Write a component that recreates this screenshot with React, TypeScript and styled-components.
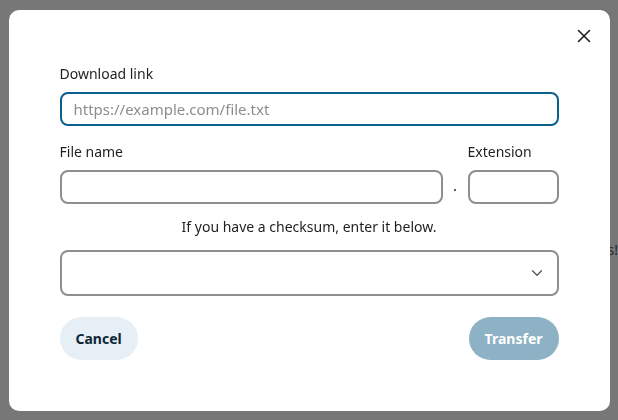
import React from "react";
import styled, { createGlobalStyle } from "styled-components";
import { X, ChevronDown } from "lucide-react";

const Global = createGlobalStyle`
  html, body { margin: 0; padding: 0; }
  body { font-family: "Noto Sans", "Open Sans", sans-serif; background: #fff; }
  * { box-sizing: border-box; }
`;

const Page = styled.div`
  width: 618px;
  height: 420px;
  display: flex;
  flex-direction: column;
  align-items: flex-end;
  padding-top: 240px;
  color: #555;
  font-size: 14px;
`;

const PageText = styled.p`
  margin: 0;
`;

const Overlay = styled.div`
  position: fixed;
  inset: 0;
  background: rgba(0, 0, 0, 0.535);
  display: flex;
  align-items: center;
  justify-content: center;
`;

const Modal = styled.div`
  width: 601px;
  height: 401px;
  background: #fff;
  border-radius: 10px;
  display: flex;
  flex-direction: column;
`;

const Header = styled.div`
  height: 54px;
  display: flex;
  justify-content: flex-end;
  align-items: flex-start;
  padding: 15px 15px 0 0;
`;

const CloseButton = styled.button`
  width: 22px;
  height: 22px;
  padding: 0;
  border: none;
  background: none;
  color: #1c1c1c;
  display: flex;
  align-items: center;
  justify-content: center;
  cursor: pointer;
`;

const Body = styled.div`
  padding: 0 51px;
  display: flex;
  flex-direction: column;
`;

const Label = styled.label`
  display: block;
  font-size: 14px;
  line-height: 20px;
  color: #1f1f1f;
  margin-bottom: 8px;
`;

const Input = styled.input<{ $focused?: boolean }>`
  width: 100%;
  height: 34px;
  border-radius: 8px;
  border: 2px solid ${(p) => (p.$focused ? "#0b5f8f" : "#8e8e8e")};
  padding: 0 12px;
  font-family: inherit;
  font-size: 15px;
  color: #222;
  outline: none;
  &::placeholder { color: #8d8d8d; }
`;

const Row = styled.div`
  display: flex;
  align-items: flex-end;
  margin-top: 16px;
`;

const Field = styled.div<{ $grow?: boolean; $width?: number }>`
  display: flex;
  flex-direction: column;
  ${(p) => (p.$grow ? "flex: 1;" : `width: ${p.$width}px;`)}
`;

const Dot = styled.span`
  width: 25px;
  height: 34px;
  display: flex;
  align-items: center;
  justify-content: center;
  padding-bottom: 4px;
  font-size: 15px;
  color: #1f1f1f;
`;

const Helper = styled.p`
  margin: 13px 0 0;
  text-align: center;
  font-size: 14px;
  line-height: 20px;
  color: #1f1f1f;
`;

const Select = styled.div`
  margin-top: 13px;
  height: 46px;
  border: 2px solid #8e8e8e;
  border-radius: 8px;
  display: flex;
  align-items: center;
  justify-content: flex-end;
  padding-right: 11px;
  color: #5a5a5a;
`;

const Actions = styled.div`
  margin-top: 21px;
  display: flex;
  justify-content: space-between;
`;

const Button = styled.button<{ $primary?: boolean }>`
  height: 43px;
  padding: 0 16px;
  border: none;
  border-radius: 22px;
  font-family: inherit;
  font-weight: 700;
  font-size: 14px;
  background: ${(p) => (p.$primary ? "#8db1c5" : "#e5eff5")};
  color: ${(p) => (p.$primary ? "#ffffff" : "#0e2535")};
  cursor: pointer;
`;

export default function App() {
  return (
    <>
      <Global />
      <Page>
        <PageText>Thanks!</PageText>
      </Page>
      <Overlay>
        <Modal>
          <Header>
            <CloseButton aria-label="Close">
              <X size={22} strokeWidth={1.7} />
            </CloseButton>
          </Header>
          <Body>
            <Label>Download link</Label>
            <Input $focused placeholder="https://example.com/file.txt" />
            <Row>
              <Field $grow>
                <Label>File name</Label>
                <Input />
              </Field>
              <Dot>.</Dot>
              <Field $width={91}>
                <Label>Extension</Label>
                <Input />
              </Field>
            </Row>
            <Helper>If you have a checksum, enter it below.</Helper>
            <Select>
              <ChevronDown size={18} strokeWidth={1.8} />
            </Select>
            <Actions>
              <Button>Cancel</Button>
              <Button $primary>Transfer</Button>
            </Actions>
          </Body>
        </Modal>
      </Overlay>
    </>
  );
}
